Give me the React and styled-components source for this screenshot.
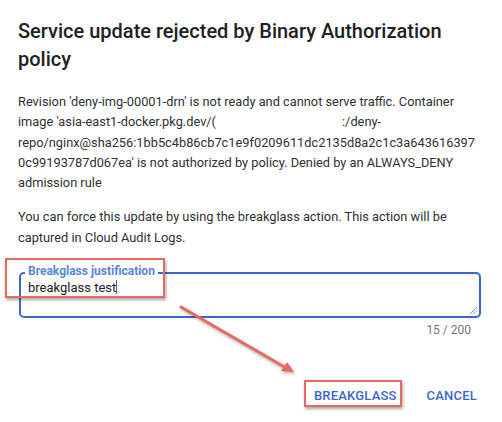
import React from 'react';
import styled, { createGlobalStyle } from 'styled-components';

const GlobalStyle = createGlobalStyle`
  html, body {
    margin: 0;
    padding: 0;
    background: #ffffff;
  }
  body {
    font-family: Roboto, "Liberation Sans", Arial, sans-serif;
    color: #202124;
  }
`;

const Dialog = styled.div`
  position: relative;
  width: 502px;
  height: 422px;
  box-sizing: border-box;
  padding: 17px 21px 0 18px;
  overflow: hidden;
`;

const Title = styled.h2`
  margin: 0;
  font-size: 20px;
  font-weight: 500;
  line-height: 28px;
  color: #202124;
`;

const Paragraph = styled.p`
  margin: ${(p) => p.$top || 0}px 0 0;
  font-size: 12.8px;
  line-height: 20.3px;
  color: #2f3133;
`;

const Redacted = styled.span`
  display: inline-block;
  width: ${(p) => p.$w}px;
`;

const FieldWrap = styled.div`
  position: relative;
  margin: 24px 0 0 1px;
`;

const Outline = styled.div`
  box-sizing: border-box;
  height: 46px;
  border: 2.5px solid #3a67cf;
  border-radius: 5px;
  padding: 6px 8px 0 7px;
`;

const FloatLabel = styled.span`
  position: absolute;
  left: 6px;
  top: -8px;
  padding: 0 3px;
  background: #ffffff;
  font-size: 12px;
  font-weight: 700;
  line-height: 14px;
  color: #5b84da;
`;

const InputText = styled.div`
  font-size: 13px;
  line-height: 16px;
  color: #202124;
`;

const Caret = styled.span`
  display: inline-block;
  width: 1px;
  height: 14px;
  background: #3a67cf;
  vertical-align: -2px;
`;

const Resize = styled.svg`
  position: absolute;
  right: 4px;
  bottom: 4px;
`;

const Counter = styled.div`
  margin-top: 4px;
  padding-right: 10px;
  text-align: right;
  font-size: 12px;
  line-height: 16px;
  color: #70757a;
`;

const Actions = styled.div`
  display: flex;
  justify-content: flex-end;
  gap: 30px;
  margin-top: 50px;
  padding-right: 4px;
`;

const TextButton = styled.button`
  border: none;
  background: none;
  padding: 0;
  font-family: inherit;
  font-size: 13px;
  font-weight: 500;
  letter-spacing: 0.2px;
  color: #3a67cf;
  cursor: pointer;
`;

const Highlight = styled.div`
  position: absolute;
  left: ${(p) => p.$x}px;
  top: ${(p) => p.$y}px;
  width: ${(p) => p.$w}px;
  height: ${(p) => p.$h}px;
  box-sizing: border-box;
  border: 2.5px solid #e8695f;
  box-shadow: 1px 2px 3px rgba(0, 0, 0, 0.35);
  pointer-events: none;
`;

const Arrow = styled.svg`
  position: absolute;
  left: 0;
  top: 0;
  pointer-events: none;
  filter: drop-shadow(1px 2px 1.5px rgba(0, 0, 0, 0.3));
`;

export default function App() {
  return (
    <>
      <GlobalStyle />
      <Dialog>
        <Title>Service update rejected by Binary Authorization policy</Title>
        <Paragraph $top={19}>
          Revision 'deny-img-00001-drn' is not ready and cannot serve traffic. Container
          <br />
          image 'asia-east1-docker.pkg.dev/(<Redacted $w={126} />:/deny-
          <br />
          repo/nginx@sha256:1bb5c4b86cb7c1e9f0209611dc2135d8a2c1c3a643616397
          <br />
          0c99193787d067ea' is not authorized by policy. Denied by an ALWAYS_DENY
          <br />
          admission rule
        </Paragraph>
        <Paragraph $top={14}>
          You can force this update by using the breakglass action. This action will be captured in Cloud Audit Logs.
        </Paragraph>

        <FieldWrap>
          <Outline>
            <InputText>
              breakglass test<Caret />
            </InputText>
          </Outline>
          <FloatLabel>Breakglass justification</FloatLabel>
          <Resize width="7" height="7" viewBox="0 0 7 7">
            <path d="M0 7L7 0M3.5 7L7 3.5" stroke="#777" strokeWidth="0.8" />
          </Resize>
        </FieldWrap>
        <Counter>15 / 200</Counter>

        <Actions>
          <TextButton>BREAKGLASS</TextButton>
          <TextButton>CANCEL</TextButton>
        </Actions>

        <Highlight $x={5} $y={258} $w={160} $h={40} />
        <Highlight $x={304} $y={380} $w={98} $h={27} />
        <Arrow width="502" height="422" viewBox="0 0 502 422">
          <line x1="181" y1="307" x2="288" y2="369" stroke="#e8695f" strokeWidth="3" strokeLinecap="round" />
          <path d="M294 372 L281 371 L287 362 Z" fill="#e8695f" />
        </Arrow>
      </Dialog>
    </>
  );
}
